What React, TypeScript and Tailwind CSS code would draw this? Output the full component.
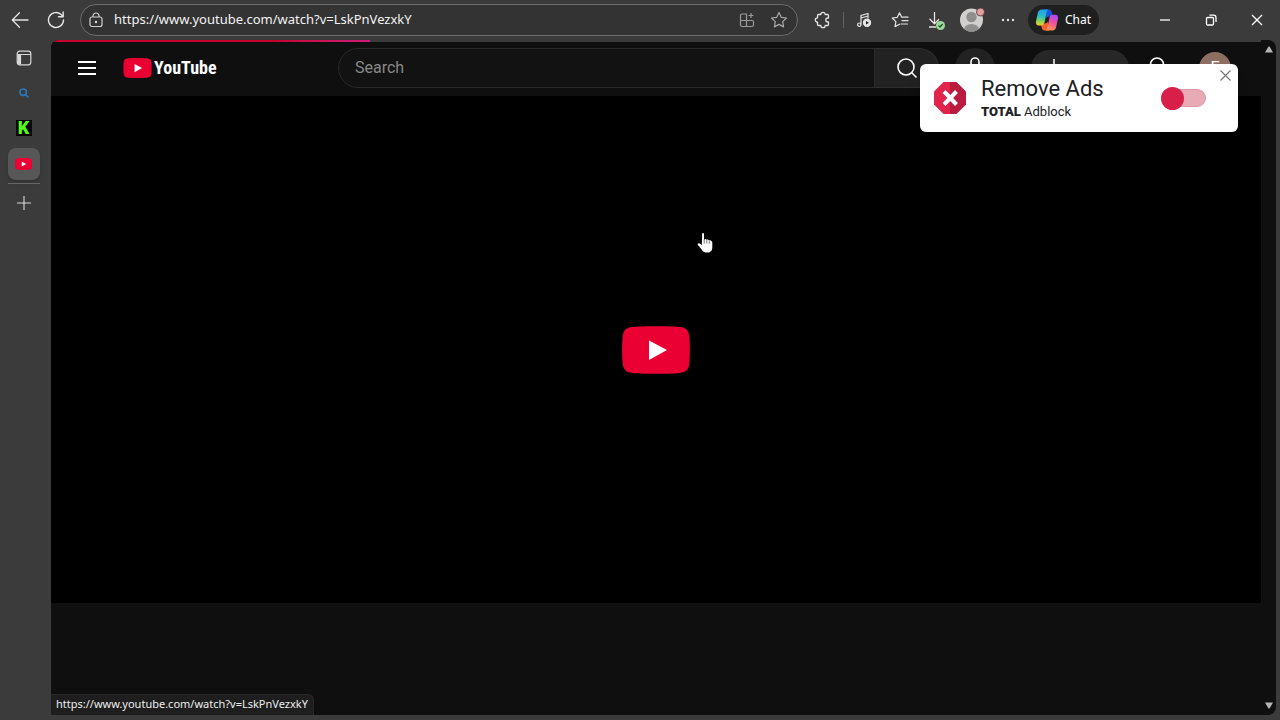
import { useState } from "react";
import type { ReactNode } from "react";

const url = "https://www.youtube.com/watch?v=LskPnVezxkY";

function ToolButton({ label, children }: { label: string; children: ReactNode }) {
  return (
    <button aria-label={label} className="flex h-8 w-9 shrink-0 items-center justify-center text-[#e4e4e4]">
      {children}
    </button>
  );
}

function WindowButton({ label, d }: { label: string; d: string }) {
  return (
    <button aria-label={label} className="flex h-10 w-[46px] items-center justify-center text-white">
      <svg width="12" height="12" viewBox="0 0 12 12" fill="none" stroke="currentColor" strokeWidth="1.3">
        <path d={d} />
      </svg>
    </button>
  );
}

function PlayLogo({ className }: { className: string }) {
  return (
    <svg className={className} viewBox="0 0 68 48">
      <path
        fill="#eb0034"
        d="M12 .8C22 0 46 0 56 .8C64 1.500 67 4 67.500 12C68 18 68 30 67.500 36C67 44 64 46.500 56 47.200C46 48 22 48 12 47.200C4 46.500 1 44 .5 36C0 30 0 18 .5 12C1 4 4 1.500 12 .8Z"
      />
      <path fill="#fff" d="M27 14.500L45 24L27 34Z" />
    </svg>
  );
}

function Copilot() {
  return (
    <svg width="24" height="22" viewBox="0 0 24 22">
      <defs>
        <linearGradient id="cool" x1="0.4" y1="0" x2="0.3" y2="1">
          <stop offset="0" stopColor="#1c9cf0" />
          <stop offset="0.45" stopColor="#2fc0c0" />
          <stop offset="0.75" stopColor="#8fd44f" />
          <stop offset="1" stopColor="#f5d02c" />
        </linearGradient>
        <linearGradient id="warm" x1="0.7" y1="0" x2="0.3" y2="1">
          <stop offset="0" stopColor="#a24dff" />
          <stop offset="0.45" stopColor="#ee4f9d" />
          <stop offset="1" stopColor="#ff9a48" />
        </linearGradient>
      </defs>
      <path fill="#1a55d8" d="M9 .5h5c1.500 0 2.300 1 2.700 2.400l1.200 4.600h-4c-1.500 0-2.200.8-2.700 2z" />
      <path fill="#f4642f" d="M14 21.500H9.500c-1.600 0-2.300-1-2.700-2.400L5.800 14.500h4.200c1.500 0 2.200-.8 2.700-2z" />
      <path fill="url(#cool)" d="M6.500.5h7.300c-1.300.3-1.800 1.500-2.200 2.800L9.500 13.500c-.5 2-1.500 3-3.200 3H4C1.400 16.500.6 14.800 1 12.500L2.800 4C3.300 1.800 4.500.5 6.500.5Z" />
      <path fill="url(#warm)" d="M17.500 21.500h-7.300c1.300-.3 1.800-1.500 2.200-2.800L14.500 8.500C15 6.500 16 5.700 17.700 5.700H20c2.600 0 3.400 1.600 3 3.800L21.200 18c-.5 2.200-1.700 3.500-3.700 3.500Z" />
    </svg>
  );
}

function Toolbar() {
  return (
    <div className="flex h-10 shrink-0 items-center pl-[2px]">
      <ToolButton label="Back">
        <svg width="18" height="18" viewBox="0 0 18 18" fill="none" stroke="currentColor" strokeWidth="1.3" strokeLinecap="round" strokeLinejoin="round">
          <path d="M17 9H1.500M8.500 1.800L1.300 9l7.200 7.200" />
        </svg>
      </ToolButton>
      <ToolButton label="Refresh">
        <svg width="18" height="18" viewBox="0 0 18 18" fill="none" stroke="currentColor" strokeWidth="1.400" strokeLinecap="round" strokeLinejoin="round">
          <path d="M16.500 9a7.500 7.500 0 1 1-2.400-5.500L16 5.500M16.200 1v4.700h-4.700" />
        </svg>
      </ToolButton>

      <div className="ml-[6px] flex h-8 min-w-0 flex-1 items-center rounded-full border border-[#6c6c6c] bg-[#333333] pl-[7px]">
        <svg className="shrink-0" width="16" height="16" viewBox="0 0 16 16" fill="none" stroke="#d0d0d0" strokeWidth="1.2">
          <rect x="2" y="5" width="12" height="9.500" rx="2" />
          <path d="M5 5V4a3 3 0 0 1 6 0v1" />
          <circle cx="8" cy="10" r="0.700" fill="#d0d0d0" />
        </svg>
        <input
          aria-label="Address"
          defaultValue={url}
          className="ml-[10px] min-w-0 flex-1 bg-transparent font-['Noto_Sans',sans-serif] text-[13px] text-[#f2f2f2] outline-none"
        />
        <button aria-label="Apps" className="flex w-8 items-center justify-center">
          <svg width="16" height="16" viewBox="0 0 16 16" fill="none" stroke="#9a9a9a" strokeWidth="1.200">
            <path d="M7.500 14.500H3A1.500 1.500 0 0 1 1.500 13V3.500A1.500 1.500 0 0 1 3 2h4.500zM1.500 8.500h11.500a1.500 1.500 0 0 1 1.500 1.500v3a1.500 1.500 0 0 1-1.500 1.500H7.500M12 1v5M9.500 3.500h5" />
          </svg>
        </button>
        <button aria-label="Favorite" className="mr-[2px] flex w-8 items-center justify-center">
          <svg width="18" height="18" viewBox="0 0 18 18" fill="none" stroke="#a8a8a8" strokeWidth="1.200" strokeLinejoin="round">
            <path d="M9 1.500l2.300 4.800 5.200.7-3.800 3.600.9 5.300L9 13.400l-4.600 2.500.9-5.300L1.500 7l5.200-.7z" />
          </svg>
        </button>
      </div>

      <div className="ml-[7px] flex items-center">
        <ToolButton label="Extensions">
          <svg width="18" height="18" viewBox="0 0 18 18" fill="none" stroke="currentColor" strokeWidth="1.300" strokeLinejoin="round">
            <path d="M4.500 3.500h2.300a2.200 2.200 0 0 1 4.400 0h2.300a1 1 0 0 1 1 1V7h-.7a2 2 0 0 0 0 4h.7v2.500a1 1 0 0 1-1 1h-2.300a2.200 2.200 0 0 1-4.400 0H4.500a1 1 0 0 1-1-1v-2.300a2.200 2.200 0 0 1 0-4.400V4.500a1 1 0 0 1 1-1Z" />
          </svg>
        </ToolButton>
        <div className="mx-[2px] h-4 w-px bg-[#646464]" />
        <ToolButton label="Media">
          <svg width="16" height="16" viewBox="0 0 16 16" fill="none" stroke="currentColor" strokeWidth="1.200">
            <path d="M5 12.500V3.500l7-2v5M5 6l7-2" />
            <circle cx="3.300" cy="12.700" r="1.700" />
            <circle cx="11" cy="10.800" r="3.600" fill="currentColor" />
            <path d="M10 9l0 3.600l3-1.800z" fill="#222" stroke="none" />
          </svg>
        </ToolButton>
        <ToolButton label="Favorites">
          <svg width="18" height="18" viewBox="0 0 18 18" fill="none" stroke="currentColor" strokeWidth="1.200" strokeLinejoin="round" strokeLinecap="round">
            <path d="M11 6.200h-.2L8.500 1.800 6.300 6.300 1.200 7l3.700 3.600-.9 5L8.500 13.200M11 6.200h6M11 9.700h6M10 13h6.500" />
          </svg>
        </ToolButton>
        <ToolButton label="Downloads">
          <svg width="18" height="20" viewBox="0 0 18 20" fill="none" stroke="currentColor" strokeWidth="1.300">
            <path d="M7.500 2v11.500M2.500 8.800l5 5 4.500-4.500M2 17h7" />
            <circle cx="13.500" cy="15.500" r="4.500" fill="#9bdc9b" stroke="none" />
            <path d="M11.500 15.500l1.500 1.500 2.700-3" stroke="#24502a" />
          </svg>
        </ToolButton>
        <ToolButton label="Profile">
          <svg width="26" height="26" viewBox="0 0 26 26">
            <clipPath id="face">
              <circle cx="12.500" cy="13" r="11.500" />
            </clipPath>
            <g clipPath="url(#face)">
              <rect width="26" height="26" fill="#d2d0ce" />
              <circle cx="12.500" cy="10" r="5.200" fill="#8f8f8d" />
              <ellipse cx="12.500" cy="22.500" rx="7.500" ry="5.500" fill="#8f8f8d" />
            </g>
            <circle cx="21.500" cy="5" r="4" fill="#ec9b9b" stroke="#3b3b3b" strokeWidth="0.800" />
          </svg>
        </ToolButton>
        <ToolButton label="More">
          <svg width="14" height="4" viewBox="0 0 14 4" fill="currentColor">
            <circle cx="2" cy="2" r="1.200" />
            <circle cx="7" cy="2" r="1.200" />
            <circle cx="12" cy="2" r="1.200" />
          </svg>
        </ToolButton>
      </div>
      <button className="ml-[2px] flex h-[30px] shrink-0 items-center gap-[6px] rounded-full bg-[#1f1f1f] pr-2 pl-[7px] font-['Noto_Sans',sans-serif] text-xs text-white">
        <Copilot />
        Chat
      </button>
      <div className="ml-[43px] flex shrink-0">
        <WindowButton label="Minimize" d="M1 6h10" />
        <WindowButton label="Restore" d="M3 3.500h4.500a1 1 0 0 1 1 1V10a1 1 0 0 1-1 1H2.500a1 1 0 0 1-1-1V4.500a1 1 0 0 1 1-1zM4.500 1.200H8.500a2.500 2.500 0 0 1 2.500 2.500V8" />
        <WindowButton label="Close" d="M1 1l10 10M11 1L1 11" />
      </div>
    </div>
  );
}

function Sidebar() {
  const tab = "flex h-8 w-8 items-center justify-center rounded-lg";
  return (
    <nav className="flex w-[51px] shrink-0 flex-col items-center gap-[3px] pt-[2px] pr-[4px]">
      <button aria-label="Tab actions" className={tab}>
        <svg width="16" height="16" viewBox="0 0 16 16" fill="none" stroke="#d8d8d8" strokeWidth="1.200">
          <rect x="1.200" y="1.200" width="13.600" height="13.600" rx="2.500" />
          <path d="M3 4.500h12M4.500 4.500v10" />
          <path d="M1.500 4h2.500v10.500H3L1.500 13z" fill="#d8d8d8" stroke="none" />
        </svg>
      </button>
      <button aria-label="Search tab" className={tab}>
        <svg width="10" height="10" viewBox="0 0 10 10" fill="none" stroke="#2877b8" strokeWidth="1.600">
          <circle cx="4.200" cy="4.200" r="3.200" />
          <path d="M6.500 6.500l3 3" />
        </svg>
      </button>
      <button aria-label="Kick tab" className={tab}>
        <span className="flex h-4 w-4 items-center justify-center bg-black font-['Roboto',sans-serif] text-lg leading-4 font-black text-[#53fc18]">
          K
        </span>
      </button>
      <button aria-label="YouTube tab" className="mt-px flex h-8 w-8 items-center justify-center rounded-lg bg-[#575757] shadow-md">
        <PlayLogo className="h-3 w-[17px]" />
      </button>
      <div className="h-px w-8 bg-[#666666]" />
      <button aria-label="New tab" className={tab}>
        <svg width="14" height="14" viewBox="0 0 14 14" stroke="#dcdcdc" strokeWidth="1.100">
          <path d="M7 0v14M0 7h14" />
        </svg>
      </button>
    </nav>
  );
}

function Masthead() {
  return (
    <header className="flex h-14 shrink-0 items-center bg-[#0f0f0f] pr-[30px] font-['Roboto',sans-serif] text-white">
      <div className="flex w-[287px] shrink-0 items-center pl-4">
        <button aria-label="Guide" className="flex h-10 w-10 items-center justify-center">
          <svg width="18" height="16" viewBox="0 0 18 16" stroke="#fff" strokeWidth="2">
            <path d="M0 2h18M0 8h18M0 14h18" />
          </svg>
        </button>
        <a href="#" className="ml-4 flex items-center gap-[2px]">
          <PlayLogo className="h-5 w-[29px]" />
          <span className="font-['Roboto_Condensed','Open_Sans_Condensed','Noto_Sans_Condensed','Roboto',sans-serif] text-lg font-bold">YouTube</span>
        </a>
      </div>
      <form className="flex h-10 min-w-0 flex-1">
        <input
          aria-label="Search"
          placeholder="Search"
          className="min-w-0 flex-1 rounded-l-full border border-[#2a2a2a] bg-[#121212] pl-4 text-base outline-none placeholder:text-[#888888]"
        />
        <button type="button" aria-label="Submit search" className="flex w-16 items-center justify-center rounded-r-full border border-l-0 border-[#2e2e2e] bg-[#222222]">
          <svg width="22" height="22" viewBox="0 0 22 22" fill="none" stroke="#fff" strokeWidth="1.600">
            <circle cx="10" cy="10" r="8" />
            <path d="M15.800 15.800l4.700 4.700" />
          </svg>
        </button>
      </form>
      <button aria-label="Search with your voice" className="ml-4 flex h-10 w-10 shrink-0 items-center justify-center rounded-full bg-[#222222]">
        <svg width="24" height="24" viewBox="0 0 24 24" fill="none" stroke="#fff" strokeWidth="1.600">
          <rect x="8" y="2" width="8" height="13" rx="4" />
          <path d="M5 11a7 7 0 0 0 14 0M12 18v4" />
        </svg>
      </button>
      <button aria-label="Create" className="ml-9 flex h-9 w-[98px] shrink-0 items-center rounded-full bg-[#272727] pl-3">
        <svg width="22" height="20" viewBox="0 0 22 20" stroke="#fff" strokeWidth="1.500">
          <path d="M11 1v18M2 10h18" />
        </svg>
      </button>
      <button aria-label="Notifications" className="ml-2 flex h-10 w-10 shrink-0 items-center justify-center">
        <svg width="24" height="24" viewBox="0 0 24 24" fill="none" stroke="#fff" strokeWidth="1.600">
          <path d="M12 2a6.500 6.500 0 0 0-6.500 6.500V13L3.500 17h17l-2-4V8.500A6.500 6.500 0 0 0 12 2zM9.500 19.500a2.600 2.600 0 0 0 5 0" />
        </svg>
      </button>
      <button className="ml-[22px] h-8 w-8 shrink-0 rounded-full bg-[#8d6e63] text-base">E</button>
    </header>
  );
}

function AdblockPopup() {
  const [on, setOn] = useState(false);

  return (
    <div className="absolute top-6 right-[38px] flex h-[68px] w-[318px] items-center rounded-md bg-white pl-[14px] font-['Roboto',sans-serif] shadow-lg">
      <svg width="32" height="32" viewBox="0 0 32 32">
        <path fill="#e0244c" d="M9.500 0H16v32H9.500L0 22.500v-13z" />
        <path fill="#b91c3f" d="M16 0h6.500L32 9.500v13L22.500 32H16z" />
        <path stroke="#fff" strokeWidth="4" d="M10 9.500l12.500 13M22.500 9.500L10 22.500" />
      </svg>
      <div className="ml-[15px] text-[#202124]">
        <p className="text-[22px] leading-7">Remove Ads</p>
        <p className="text-[13px] leading-[18px]">
          <span className="font-black">TOTAL</span> Adblock
        </p>
      </div>
      <label className="relative mr-8 ml-auto flex h-[23px] w-[45px] items-center">
        <input
          type="checkbox"
          aria-label="Remove Ads"
          checked={on}
          onChange={() => setOn(!on)}
          className="peer h-[18px] w-full appearance-none rounded-full border border-[#dc9aa7] bg-[#e8abb6]"
        />
        <span className="absolute left-0 h-[23px] w-[23px] rounded-full bg-[#d81f4a] peer-checked:left-[22px]" />
      </label>
      <button aria-label="Close popup" className="absolute top-[6px] right-[7px]">
        <svg width="11" height="11" viewBox="0 0 11 11" stroke="#777" strokeWidth="1.200">
          <path d="M.5.5l10 10M10.500.5l-10 10" />
        </svg>
      </button>
    </div>
  );
}

export default function App() {
  return (
    <div className="flex h-screen flex-col overflow-hidden bg-[#3b3b3b]">
      <Toolbar />
      <div className="flex min-h-0 flex-1">
        <Sidebar />
        <main className="relative mr-1 mb-[5px] flex min-w-0 flex-1 overflow-hidden rounded-t-lg rounded-br-lg bg-[#0f0f0f]">
          <div className="relative flex min-w-0 flex-1 flex-col">
            <Masthead />
            <div className="absolute inset-x-0 top-0 h-[2px] bg-[#3b3b3b]">
              <div className="h-full w-[319px] bg-linear-to-r from-[#c5002f] from-70% to-[#d01a78]" />
            </div>
            <button aria-label="Play video" className="relative flex h-[507px] w-full shrink-0 items-center justify-center bg-black">
              <PlayLogo className="h-12 w-[68px]" />
              <svg className="absolute top-[136px] left-[646px]" width="17" height="21" viewBox="0 0 17 21" fill="#fff">
                <path d="M5.200 1.200c.9-.5 1.800 0 1.800 1v5.300l.4.200c.6-1 2-.8 2.300.2.700-.7 2-.4 2.300.6.800-.7 2.200-.2 2.500.8.300 0 .8.500.8 1.300v4.800c0 2.500-1.500 5-4.200 5H8.500c-1.700 0-2.700-1-3.500-2.300L.8 12.800c-.6-1 .7-2.100 1.800-1.400l2.200 1.500z" />
                <path d="M7.200 7.500v4M9.800 8v3.500M12.300 8.800v3" stroke="#222" strokeWidth="0.600" />
              </svg>
            </button>
          </div>
          <div className="flex w-[15px] shrink-0 flex-col items-center justify-between pt-[6px] pb-[6px]">
            <svg width="8" height="7" viewBox="0 0 8 7" fill="#b5b5b5">
              <path d="M3.500.5h1L8 6.500H0z" />
            </svg>
            <svg width="8" height="7" viewBox="0 0 8 7" fill="#b5b5b5">
              <path d="M0 .5h8L4.500 6.500h-1z" />
            </svg>
          </div>
          <AdblockPopup />
          <div className="absolute bottom-0 left-0 rounded-tr-md border-t border-r border-[#292929] bg-[#1e1e1e] px-[5px] pb-[2px] font-['Noto_Sans',sans-serif] text-[11px] leading-[18px] text-[#ededed]">
            {url}
          </div>
        </main>
      </div>
    </div>
  );
}
